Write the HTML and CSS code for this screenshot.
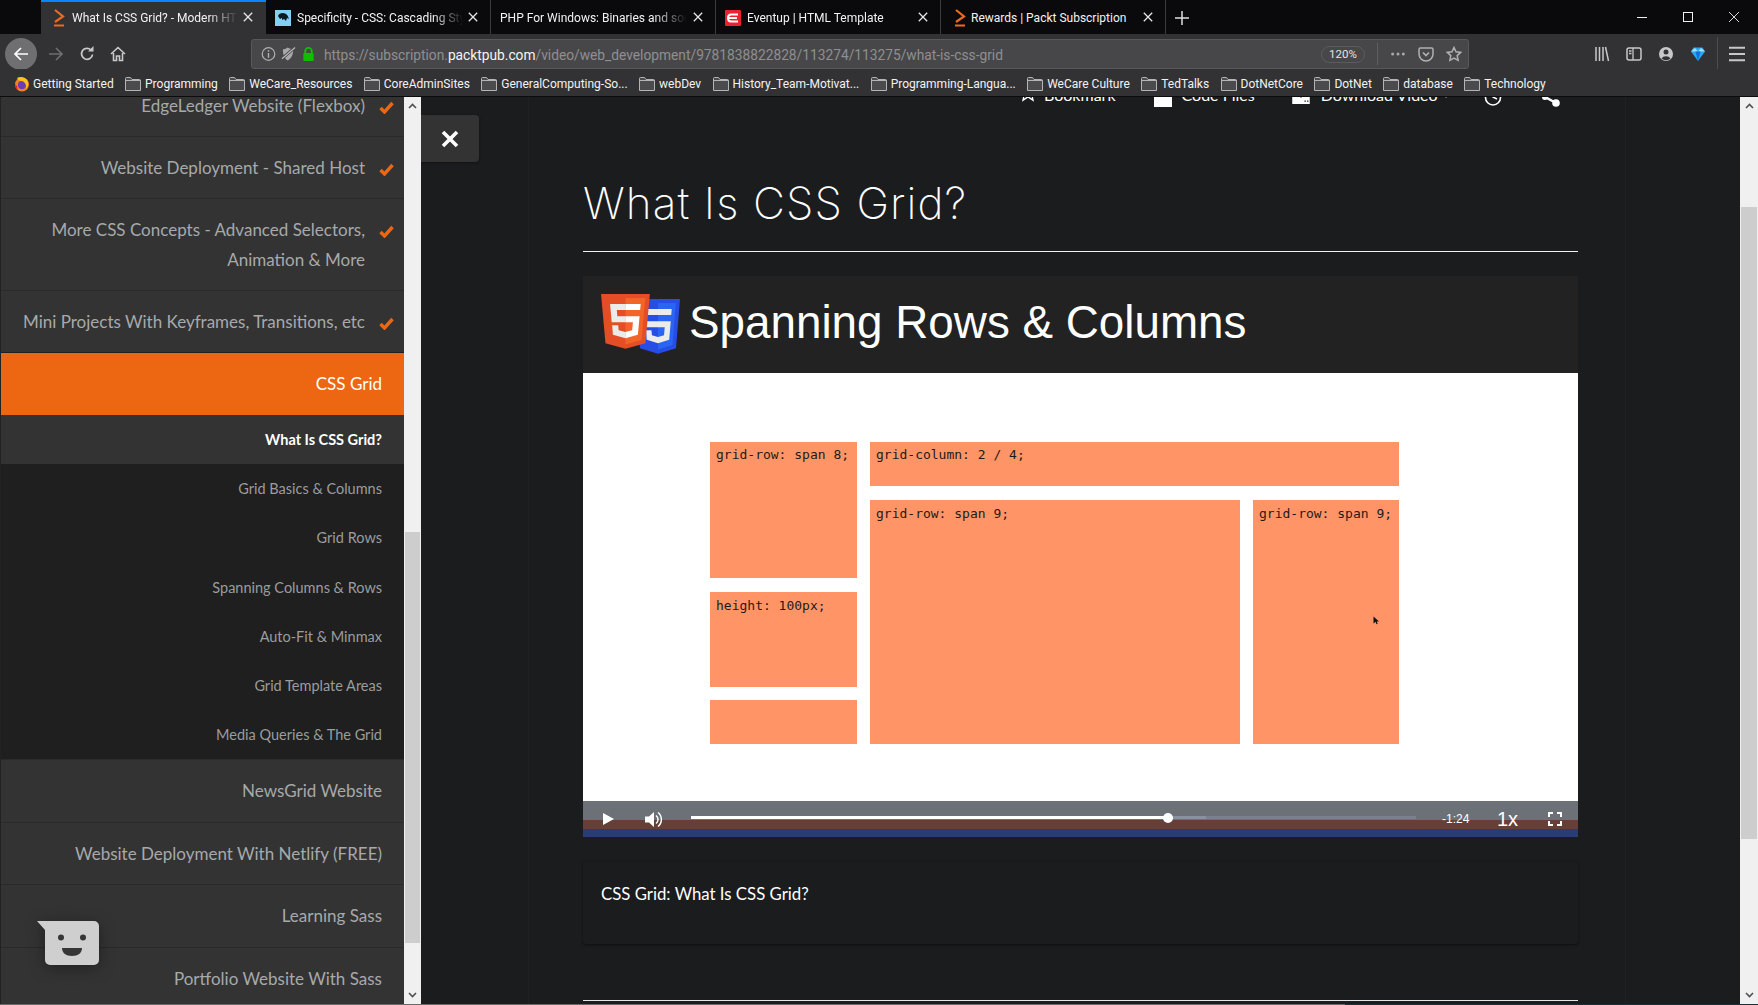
FILE: index.html
```html
<!DOCTYPE html>
<html lang="en">
<head>
<meta charset="utf-8">
<title>What Is CSS Grid? - Modern HTML</title>
<link rel="stylesheet" href="styles.css">
</head>
<body>
<svg class="defs" width="0" height="0" aria-hidden="true">
  <symbol id="folder" viewBox="0 0 16 14"><path d="M.5 13.5V1.5a1 1 0 0 1 1-1h4l1.5 2h7.5a1 1 0 0 1 1 1v10z" fill="#4b4b4d" stroke="#b4b4b6"/><path d="M.5 3.5h15" stroke="#b4b4b6"/></symbol>
  <symbol id="packt" viewBox="0 0 14 18"><path d="M2 1l8 6.5L2 13" fill="none" stroke="#ee6a1c" stroke-width="2.2"/><path d="M1 16.5h10" stroke="#ee6a1c" stroke-width="2"/></symbol>
  <symbol id="close" viewBox="0 0 10 10"><path d="M.8.8l8.4 8.4M9.2.8L.8 9.2" stroke="#e6e6e6" stroke-width="1.3" fill="none"/></symbol>
  <symbol id="check" viewBox="0 0 15 13"><path d="M1.5 7l4 4 8-9" fill="none" stroke="#ed6611" stroke-width="3.4"/></symbol>
  <symbol id="up" viewBox="0 0 9 6"><path d="M1 5l3.5-3.5L8 5" fill="none" stroke="#505050" stroke-width="1.6"/></symbol>
  <symbol id="down" viewBox="0 0 9 6"><path d="M1 1l3.5 3.5L8 1" fill="none" stroke="#505050" stroke-width="1.6"/></symbol>
</svg>

<header class="chrome">
  <div class="tabbar">
    <div class="tab tab-active">
      <svg class="fav fav-packt"><use href="#packt"/></svg>
      <span class="tab-label">What Is CSS Grid? - Modern HTML</span>
      <svg class="tab-close"><use href="#close"/></svg>
    </div>
    <div class="tab">
      <svg class="fav" viewBox="0 0 16 16"><rect width="16" height="16" fill="#83d0f2"/><path d="M3 6c1-3 5-4 8-2 2 1 2 3 3 5l-2-1-1 3-2-2-2 1V8L5 9z" fill="#0c1a24"/></svg>
      <span class="tab-label">Specificity - CSS: Cascading Style Sheets</span>
      <svg class="tab-close"><use href="#close"/></svg>
    </div>
    <div class="tab">
      <span class="tab-label tab-label-wide">PHP For Windows: Binaries and sources</span>
      <svg class="tab-close"><use href="#close"/></svg>
    </div>
    <div class="tab">
      <svg class="fav" viewBox="0 0 16 16"><rect width="16" height="16" rx="1" fill="#e8222e"/><path d="M13 4.500H6C4 4.500 3 6 3 8s1 3.500 3 3.500h7M3.500 8H12" fill="none" stroke="#fff" stroke-width="2"/></svg>
      <span class="tab-label">Eventup | HTML Template</span>
      <svg class="tab-close"><use href="#close"/></svg>
    </div>
    <div class="tab">
      <svg class="fav fav-packt"><use href="#packt"/></svg>
      <span class="tab-label tab-label-plain">Rewards | Packt Subscription</span>
      <svg class="tab-close"><use href="#close"/></svg>
    </div>
    <svg class="newtab" viewBox="0 0 14 14"><path d="M7 0v14M0 7h14" stroke="#e0e0e0" stroke-width="1.5"/></svg>
    <div class="win-controls">
      <span class="win-btn"><svg viewBox="0 0 10 10"><path d="M0 5.500h10" stroke="#f0f0f0"/></svg></span>
      <span class="win-btn"><svg viewBox="0 0 10 10"><rect x=".5" y=".5" width="9" height="9" fill="none" stroke="#f0f0f0"/></svg></span>
      <span class="win-btn"><svg viewBox="0 0 10 10"><path d="M0 0l10 10M10 0L0 10" stroke="#f0f0f0" stroke-width=".9"/></svg></span>
    </div>
  </div>

  <div class="navbar">
    <span class="back"><svg viewBox="0 0 16 16"><path d="M15 8H2M8 2L2 8l6 6" fill="none" stroke="#fff" stroke-width="1.700"/></svg></span>
    <span class="nav-btn"><svg viewBox="0 0 16 16"><path d="M1 8h13M8 2l6 6-6 6" fill="none" stroke="#6e6e70" stroke-width="1.700"/></svg></span>
    <span class="nav-btn"><svg viewBox="0 0 16 16"><path d="M13.500 8.500A5.500 5.500 0 1 1 12 4" fill="none" stroke="#c8c8ca" stroke-width="1.800"/><path d="M9 5.500h5.500V0z" fill="#c8c8ca"/></svg></span>
    <span class="nav-btn"><svg viewBox="0 0 16 16"><path d="M1 8l7-6.500L15 8M3.500 7v7.500h3V10h3v4.500h3V7" fill="none" stroke="#c8c8ca" stroke-width="1.600"/></svg></span>
    <div class="urlbar">
      <span class="url-icon"><svg viewBox="0 0 16 16"><circle cx="8" cy="8" r="6.700" fill="none" stroke="#b0b0b2" stroke-width="1.300"/><path d="M8 7v5M8 4v1.600" stroke="#b0b0b2" stroke-width="1.500"/></svg></span>
      <span class="url-icon"><svg viewBox="0 0 16 16"><path d="M2 3c2 0 4-1 5-2 2 1 4 2 6 2 0 5-1 9-6 12C3 12 2 8 2 3z" fill="#a8a8aa"/><path d="M1 13L15 1" stroke="#474749" stroke-width="3"/><path d="M1 13L15 1" stroke="#b8b8ba" stroke-width="1.300"/></svg></span>
      <span class="url-icon"><svg viewBox="0 0 16 16"><path d="M4.500 7V5a3.500 3.500 0 0 1 7 0v2" fill="none" stroke="#12bc00" stroke-width="2"/><rect x="2.500" y="7" width="11" height="8.500" rx="1" fill="#12bc00"/></svg></span>
      <span class="url-text">https://subscription.<b class="url-domain">packtpub.com</b>/video/web_development/9781838822828/113274/113275/what-is-css-grid</span>
      <span class="zoom-pill">120%</span>
      <span class="url-sep"></span>
      <span class="url-action"><svg viewBox="0 0 18 18"><circle cx="3" cy="9" r="1.700" fill="#a8a8aa"/><circle cx="9" cy="9" r="1.700" fill="#a8a8aa"/><circle cx="15" cy="9" r="1.700" fill="#a8a8aa"/></svg></span>
      <span class="url-action"><svg viewBox="0 0 16 16"><path d="M1 3.500A1.500 1.500 0 0 1 2.500 2h11A1.500 1.500 0 0 1 15 3.500V8a7 7 0 0 1-14 0z" fill="none" stroke="#b0b0b2" stroke-width="1.500"/><path d="M5 6.500l3 3 3-3" fill="none" stroke="#b0b0b2" stroke-width="1.700"/></svg></span>
      <span class="url-action"><svg viewBox="0 0 16 16"><path d="M8 1.500l2 4.300 4.700.6-3.500 3.200.9 4.700L8 12l-4.100 2.300.9-4.700L1.300 6.400 6 5.800z" fill="none" stroke="#b0b0b2" stroke-width="1.500"/></svg></span>
    </div>
    <div class="tools">
      <span class="tool"><svg viewBox="0 0 16 16"><path d="M2 1v14M5.500 1v14M9 1v14M11.500 1l3 14" stroke="#c8c8ca" stroke-width="1.500" fill="none"/></svg></span>
      <span class="tool"><svg viewBox="0 0 16 16"><rect x="1" y="2" width="14" height="12" rx="2" fill="none" stroke="#c8c8ca" stroke-width="1.500"/><path d="M7 2v12M3 5h2.500M3 7.500h2.500" stroke="#c8c8ca" stroke-width="1.300"/></svg></span>
      <span class="tool"><svg viewBox="0 0 16 16"><circle cx="8" cy="8" r="7" fill="#c8c8ca"/><circle cx="8" cy="6" r="2.500" fill="#323234"/><path d="M3.500 12.500a5 4 0 0 1 9 0 6.500 6.500 0 0 1-9 0z" fill="#323234"/></svg></span>
      <span class="tool"><svg viewBox="0 0 16 16"><path d="M3.500 1.500h9L15 5.500 8 15 1 5.500z" fill="#2aa7f0"/><path d="M5 2l-4 3.500h14L11 2 8 5.500z" fill="#9fe0ff"/><path d="M5.500 5.500L8 15l2.500-9.500z" fill="#0f6fd8"/></svg></span>
      <span class="tools-sep"></span>
      <span class="tool"><svg viewBox="0 0 14 14"><path d="M0 1.500h14M0 7h14M0 12.500h14" stroke="#c8c8ca" stroke-width="1.800"/></svg></span>
    </div>
  </div>

  <nav class="bookmarks">
    <span class="bm bm-first"><svg class="bm-icon" viewBox="0 0 16 16"><circle cx="8" cy="8.500" r="7" fill="#f5821f"/><circle cx="8" cy="9" r="4.200" fill="#6a3fb5"/><path d="M3 2c3-2 8-1 10 2 2 3 1 7-1 9 1-4-1-7-4-8-2 0-3 0-5-3z" fill="#f9c51d"/><path d="M1 8c0 3 1 5 3 6l-1-4z" fill="#e5272f"/></svg><span>Getting Started</span></span>
    <span class="bm"><svg class="bm-icon"><use href="#folder"/></svg><span>Programming</span></span>
    <span class="bm"><svg class="bm-icon"><use href="#folder"/></svg><span>WeCare_Resources</span></span>
    <span class="bm"><svg class="bm-icon"><use href="#folder"/></svg><span>CoreAdminSites</span></span>
    <span class="bm"><svg class="bm-icon"><use href="#folder"/></svg><span>GeneralComputing-So...</span></span>
    <span class="bm"><svg class="bm-icon"><use href="#folder"/></svg><span>webDev</span></span>
    <span class="bm"><svg class="bm-icon"><use href="#folder"/></svg><span>History_Team-Motivat...</span></span>
    <span class="bm"><svg class="bm-icon"><use href="#folder"/></svg><span>Programming-Langua...</span></span>
    <span class="bm"><svg class="bm-icon"><use href="#folder"/></svg><span>WeCare Culture</span></span>
    <span class="bm"><svg class="bm-icon"><use href="#folder"/></svg><span>TedTalks</span></span>
    <span class="bm"><svg class="bm-icon"><use href="#folder"/></svg><span>DotNetCore</span></span>
    <span class="bm"><svg class="bm-icon"><use href="#folder"/></svg><span>DotNet</span></span>
    <span class="bm"><svg class="bm-icon"><use href="#folder"/></svg><span>database</span></span>
    <span class="bm"><svg class="bm-icon"><use href="#folder"/></svg><span>Technology</span></span>
  </nav>
</header>

<div class="viewport">
  <aside class="sidebar">
    <div class="course">
      <div class="course-list">
        <div class="row row-done"><span class="row-text">EdgeLedger Website (Flexbox)</span><svg class="check"><use href="#check"/></svg></div>
        <div class="row row-done"><span class="row-text">Website Deployment - Shared Host</span><svg class="check"><use href="#check"/></svg></div>
        <div class="row row-done"><span class="row-text">More CSS Concepts - Advanced Selectors,<br>Animation &amp; More</span><svg class="check"><use href="#check"/></svg></div>
        <div class="row row-done row-last"><span class="row-text">Mini Projects With Keyframes, Transitions, etc</span><svg class="check"><use href="#check"/></svg></div>
        <div class="row row-active"><span class="row-text">CSS Grid</span></div>
        <ul class="lessons">
          <li class="lesson lesson-current">What Is CSS Grid?</li>
          <li class="lesson">Grid Basics &amp; Columns</li>
          <li class="lesson">Grid Rows</li>
          <li class="lesson">Spanning Columns &amp; Rows</li>
          <li class="lesson">Auto-Fit &amp; Minmax</li>
          <li class="lesson">Grid Template Areas</li>
          <li class="lesson">Media Queries &amp; The Grid</li>
        </ul>
        <div class="row row-lower"><span class="row-text">NewsGrid Website</span></div>
        <div class="row row-lower"><span class="row-text">Website Deployment With Netlify (FREE)</span></div>
        <div class="row row-lower"><span class="row-text">Learning Sass</span></div>
        <div class="row row-lower"><span class="row-text">Portfolio Website With Sass</span></div>
      </div>
      <svg class="chat" viewBox="0 0 62 44"><path d="M0 0h57a5 5 0 0 1 5 5v34a5 5 0 0 1-5 5H13a5 5 0 0 1-5-5V9z" fill="#cfcfcf"/><circle cx="24" cy="16.500" r="3" fill="#363636"/><circle cx="46" cy="16.500" r="3" fill="#363636"/><path d="M25 27h20c0 5-4 8-10 8s-10-3-10-8z" fill="#363636"/></svg>
    </div>
    <div class="scrollbar scrollbar-side">
      <svg class="sb-arrow"><use href="#up"/></svg>
      <span class="sb-thumb"></span>
      <svg class="sb-arrow sb-arrow-end"><use href="#down"/></svg>
    </div>
  </aside>

  <main class="content">
    <button class="close-panel" aria-label="Close"><svg viewBox="0 0 18 18"><path d="M2 2l14 14M16 2L2 16" stroke="#fff" stroke-width="3.600"/></svg></button>
    <div class="panel">
      <div class="actions">
        <div class="actions-row">
          <span class="action action-bookmark"><svg class="action-icon-star" viewBox="0 0 16 24"><path d="M8 1l2.300 5.500 5.700.5-4.300 3.800 1.300 5.700L8 13.500 3 16.500l1.300-5.700L0 7l5.700-.5z" transform="translate(0 -1) scale(1 1.100)" fill="none" stroke="#fff" stroke-width="1.300"/></svg>Bookmark</span>
          <span class="action action-code"><span class="code-box"></span>Code Files</span>
          <span class="action action-dl"><svg class="dl-icon" viewBox="0 0 20 24"><path d="M0 14h7l3 3 3-3h7v10H0z" fill="#fff"/><rect x="14" y="20" width="1.500" height="1.500" fill="#1b1c1e"/><rect x="17" y="20" width="1.500" height="1.500" fill="#1b1c1e"/></svg>Download Video <span class="caret">▾</span></span>
          <svg class="action-clock" viewBox="0 0 18 24"><circle cx="9" cy="14.500" r="7.500" fill="none" stroke="#fff" stroke-width="1.600"/><path d="M9 8v6l4 2" fill="none" stroke="#fff" stroke-width="1.600"/></svg>
          <svg class="action-share" viewBox="0 0 18 24"><circle cx="3" cy="14" r="3" fill="#fff"/><circle cx="14" cy="20" r="3.800" fill="#fff"/><path d="M3 14l11 6" stroke="#fff" stroke-width="2.500"/></svg>
        </div>
      </div>
      <h1 class="page-title">What Is CSS Grid?</h1>

      <section class="video">
        <div class="slide-head">
          <svg class="logos" viewBox="0 0 80 60">
            <g transform="translate(32.100 5) scale(.0973 .107)">
              <path d="M71 461L30 0h452l-41 461-185 51z" fill="#264de4"/>
              <path d="M256 473l149-42 35-394H256z" fill="#2965f1"/>
              <path d="M114 94h283l-5 56H120zM125 208h262l-16 174-115 32-116-32-7-89h56l4 45 63 17 62-17 7-73H130z" fill="#ebebeb"/>
            </g>
            <g transform="translate(-3.200 0) scale(.108 .107)">
              <path d="M71 461L30 0h452l-41 461-185 51z" fill="#e44d26"/>
              <path d="M256 473l149-42 35-394H256z" fill="#f16529"/>
              <path d="M256 208h-75l-5-58h80V94H114l1 15 14 156h127zM256 355l-63-17-4-45h-56l7 89 116 32z" fill="#ebebeb"/>
              <path d="M255 208v57h70l-7 73-63 17v59l116-32 16-174zM255 94v56h137l5-56z" fill="#fff"/>
            </g>
          </svg>
          <span class="slide-title">Spanning Rows &amp; Columns</span>
        </div>
        <div class="stage">
          <div class="demo">
            <div class="demo-left">
              <div class="cell cell-a">grid-row: span 8;</div>
              <div class="cell cell-b">height: 100px;</div>
              <div class="cell cell-c"></div>
            </div>
            <div class="demo-right">
              <div class="cell cell-top">grid-column: 2 / 4;</div>
              <div class="demo-bottom">
                <div class="cell cell-mid">grid-row: span 9;</div>
                <div class="cell cell-side">grid-row: span 9;
                  <svg class="pointer" viewBox="0 0 6 9"><path d="M.5.500v7l2-1.700 1 2.500 1.200-.5-1-2.400h2.300z" fill="#111"/></svg>
                </div>
              </div>
            </div>
          </div>
        </div>
        <div class="player">
          <div class="band band-grey"></div>
          <div class="band band-brown"></div>
          <div class="band band-blue"></div>
          <div class="controls">
            <svg class="ctl-play" viewBox="0 0 11 12"><path d="M0 0l11 6-11 6z" fill="#fff"/></svg>
            <svg class="ctl-vol" viewBox="0 0 18 17"><path d="M0 5.500h4L9 1v15l-5-4.500H0z" fill="#fff"/><path d="M11 4.500a5 5 0 0 1 0 8M13 1.500a9 9 0 0 1 0 14" fill="none" stroke="#fff" stroke-width="1.500"/></svg>
            <div class="progress">
              <span class="buffered"></span>
              <span class="played"><span class="knob"></span></span>
            </div>
            <span class="time">-1:24</span>
            <span class="rate">1x</span>
            <svg class="ctl-full" viewBox="0 0 14 14"><path d="M1 5V1h4M9 1h4v4M13 9v4H9M5 13H1V9" fill="none" stroke="#fff" stroke-width="2"/></svg>
          </div>
        </div>
      </section>

      <section class="caption">CSS Grid: What Is CSS Grid?</section>
      <hr class="end-rule">
    </div>
    <div class="scrollbar scrollbar-main">
      <svg class="sb-arrow"><use href="#up"/></svg>
      <span class="sb-thumb"></span>
      <svg class="sb-arrow sb-arrow-end"><use href="#down"/></svg>
    </div>
  </main>
</div>
<div class="window-edge"></div>
</body>
</html>
```

FILE: styles.css
```css
* { box-sizing: border-box; }
html, body { margin: 0; padding: 0; height: 100%; }
body {
  width: 1758px;
  height: 1005px;
  overflow: hidden;
  background: #1b1c1e;
  display: flex;
  flex-direction: column;
  font-family: "Lato", "Liberation Sans", sans-serif;
}
.defs { position: absolute; }
svg { display: block; }

/* browser chrome */
.chrome {
  flex: 0 0 97px;
  min-height: 0;
  display: flex;
  flex-direction: column;
  font-family: "Roboto", "Liberation Sans", sans-serif;
  font-size: 12px;
  color: #f2f2f2;
}
.tabbar {
  flex: 0 0 34px;
  background: #0a0a0c;
  display: flex;
  padding-left: 41px;
}
.tab {
  flex: 0 0 225px;
  display: flex;
  align-items: center;
  position: relative;
  padding-left: 9px;
  padding-top: 2px;
  border-right: 1px solid #3c3c3e;
}
.tab-active {
  background: #323234;
  border-right: 0;
  box-shadow: inset 0 2px 0 #0a84ff;
  padding-left: 12px;
}
.fav { width: 16px; height: 16px; flex: none; margin-right: 6px; }
.fav-packt { width: 14px; height: 18px; margin-left: 4px; margin-right: 3px; }
.tab-active .fav-packt { margin-left: 0; margin-right: 5px; width: 14px; }
.tab-label {
  width: 166px;
  white-space: nowrap;
  overflow: hidden;
  -webkit-mask-image: linear-gradient(to right, #000 82%, transparent 100%);
  mask-image: linear-gradient(to right, #000 82%, transparent 100%);
}
.tab-label-wide { width: 187px; }
.tab-label-plain { -webkit-mask-image: none; mask-image: none; }
.tab-close { position: absolute; left: 202px; top: 12px; width: 10px; height: 10px; }
.newtab { width: 14px; height: 14px; margin: 11px 0 0 9px; }
.win-controls { margin-left: auto; margin-right: 1px; display: flex; }
.win-btn { width: 46px; height: 34px; display: flex; align-items: center; justify-content: center; }
.win-btn svg { width: 10px; height: 10px; }

.navbar {
  flex: 0 0 35px;
  min-height: 0;
  background: #323234;
  display: flex;
  align-items: center;
  padding-left: 5px;
  padding-top: 5px;
}
.back {
  width: 32px; height: 32px; border-radius: 50%; flex: none;
  background: #6f6f71;
  display: flex; align-items: center; justify-content: center;
  margin-right: 3px;
}
.back svg { width: 16px; height: 16px; }
.nav-btn { width: 31px; height: 30px; flex: none; display: flex; align-items: center; justify-content: center; }
.nav-btn svg { width: 16px; height: 16px; }
.urlbar {
  width: 1218px;
  height: 30px;
  flex: none;
  margin-left: 118px;
  background: #474749;
  border: 1px solid #58585a;
  border-radius: 3px;
  display: flex;
  align-items: center;
  padding-left: 6px;
}
.url-icon { width: 20px; display: flex; justify-content: center; }
.url-icon svg { width: 15px; height: 16px; }
.url-text { margin-left: 6px; padding-top: 1px; font-size: 13.750px; color: #8f8f91; white-space: nowrap; flex: 1; }
.url-domain { font-weight: 400; color: #f4f4f4; }
.zoom-pill {
  width: 44px; height: 17px; border-radius: 9px;
  border: 1px solid #5c5c5e;
  text-align: center; font-size: 11.500px; line-height: 15px; color: #e4e4e4;
}
.url-sep { width: 1px; height: 22px; background: #5f5f61; margin: 0 6px 0 12px; }
.url-action { width: 28px; display: flex; justify-content: center; }
.url-action svg { width: 16px; height: 16px; }
.tools { display: flex; align-items: center; margin-left: 117px; }
.tool { width: 32px; display: flex; justify-content: center; }
.tool svg { width: 16px; height: 16px; }
.tools-sep { width: 1px; height: 34px; background: #4c4c4e; margin: 0 3px; }

.bookmarks {
  flex: 0 0 28px;
  background: #323234;
  border-bottom: 1px solid #0c0c0d;
  display: flex;
  align-items: center;
  padding: 3px 0 0 14px;
  gap: 11.400px;
  position: relative;
}
.bm { display: flex; align-items: center; gap: 4px; white-space: nowrap; }
.bm-first { gap: 3px; }
.bm-icon { width: 16px; height: 14px; }
.bm-first .bm-icon { height: 16px; }

/* page */
.viewport { flex: 1; min-height: 0; display: flex; }
.window-edge { flex: 0 0 1px; background: linear-gradient(to right, #6a6a6a 1345px, #16303c 1345px); }
.sidebar { flex: 0 0 421px; display: flex; }
.course {
  flex: 0 0 404px;
  background: #333;
  border-left: 1px solid #222;
  overflow: hidden;
  position: relative;
}
.course-list { margin-top: -22px; }
.row {
  display: flex;
  justify-content: flex-end;
  align-items: flex-start;
  text-align: right;
  padding: 16px 22px 15px 0;
  border-bottom: 1px solid #2a2a2a;
  font-size: 17px;
  line-height: 30px;
  color: #a7a9ab;
}
.row-done { padding-right: 10px; }
.row-last { border-bottom-color: #1f1f1f; }
.check { width: 15px; height: 13px; margin: 10px 0 0 14px; flex: none; }
.row-active { background: #ed6611; color: #fff; border-bottom: 0; padding-bottom: 16px; }
.row-lower { padding-bottom: 15.500px; }
.lessons { margin: 0; padding: 0; list-style: none; background: #1f1f1f; border-bottom: 1px solid #2b2b2b; }
.lesson {
  height: 49.200px;
  padding-right: 22px;
  text-align: right;
  font-size: 14.500px;
  line-height: 50px;
  color: #9a9c9e;
}
.lesson-current { background: #333; color: #fff; font-weight: 700; }
.chat {
  position: absolute;
  left: 36px;
  top: 824px;
  width: 62px;
  height: 44px;
  filter: drop-shadow(0 3px 8px rgba(0,0,0,.35));
}

.scrollbar {
  flex: 0 0 17px;
  background: #f0f0f0;
  display: flex;
  flex-direction: column;
  align-items: center;
  position: relative;
}
.sb-arrow { width: 9px; height: 6px; margin-top: 6px; flex: none; }
.sb-arrow-end { margin-top: auto; margin-bottom: 6px; }
.sb-thumb { background: #cdcdcd; width: 15px; display: block; flex: none; }
.scrollbar-side .sb-thumb { margin-top: 423px; height: 411px; }
.scrollbar-main { flex-basis: 18px; }
.scrollbar-main .sb-thumb { margin-top: 98px; height: 632px; width: 16px; }

.content {
  flex: 1;
  min-width: 0;
  display: flex;
  position: relative;
  background: #1b1c1e;
  overflow: hidden;
}
.close-panel {
  position: absolute;
  left: 0;
  top: 18px;
  width: 58px;
  height: 47px;
  background: #333;
  border: 0;
  border-radius: 0 4px 4px 0;
  box-shadow: 0 1px 3px rgba(0,0,0,.4);
  display: flex; align-items: center; justify-content: center;
  padding: 0;
}
.close-panel svg { width: 18px; height: 18px; }
.panel {
  width: 1098px;
  margin-left: 107px;
  margin-right: auto;
  padding: 0 47px 0 54px;
  border-left: 1px solid #202124;
  border-right: 1px solid #202124;
  overflow: hidden;
}
.actions { height: 10px; overflow: hidden; }
.actions-row {
  margin-top: -14px;
  height: 24px;
  display: flex;
  color: #fff;
  font-size: 16px;
  line-height: 24px;
  white-space: nowrap;
}
.action { display: flex; }
.action-bookmark { margin-left: 437px; gap: 8px; }
.action-icon-star { width: 16px; height: 24px; }
.action-code { margin-left: 38px; gap: 10px; }
.code-box { width: 18px; height: 24px; background: #fff; }
.action-dl { margin-left: 36px; gap: 10px; }
.dl-icon { width: 20px; height: 21px; }
.caret { font-size: 8px; margin-left: -4px; }
.action-clock { width: 18px; height: 24px; margin-left: 36px; }
.action-share { width: 18px; height: 24px; margin-left: 40px; }

.page-title {
  margin: 0 0 24px;
  padding: 68px 0 20px;
  border-bottom: 1px solid #f0f0f0;
  font-family: "Inter", "Lato", sans-serif;
  font-weight: 200;
  font-size: 44px;
  letter-spacing: 1.100px;
  line-height: 56px;
  color: #fff;
}
.video { display: flex; flex-direction: column; height: 561px; }
.slide-head {
  flex: 0 0 97px;
  background: #222;
  display: flex;
  align-items: center;
  padding-left: 18px;
}
.logos { width: 80px; height: 60px; margin-top: -2px; }
.slide-title {
  margin: -3px 0 0 8px;
  font-family: "Liberation Sans", Arial, sans-serif;
  font-size: 45.800px;
  color: #fff;
}
.stage { flex: 0 0 428px; background: #fff; padding: 69px 0 0 127px; }
.demo { display: flex; gap: 13px; }
.demo-left { width: 147px; display: flex; flex-direction: column; gap: 13px; }
.demo-right { width: 529px; display: flex; flex-direction: column; gap: 14px; }
.demo-bottom { display: flex; gap: 13px; height: 244px; }
.cell {
  background: #ff9566;
  padding: 5px 6px;
  font-family: "DejaVu Sans Mono", monospace;
  font-size: 13px;
  line-height: 16px;
  color: #1e1a18;
  white-space: nowrap;
}
.cell-a { height: 136px; margin-bottom: 1px; }
.cell-b { height: 95px; padding-top: 6px; }
.cell-c { height: 44px; }
.cell-top { height: 44px; }
.cell-mid { width: 370px; padding-top: 6px; }
.cell-side { width: 146px; position: relative; padding-top: 6px; }
.pointer { position: absolute; left: 120px; top: 116px; width: 6px; height: 9px; }

.player { flex: 1; position: relative; display: flex; flex-direction: column; }
.band-grey { flex: 0 0 19px; background: #6b7177; }
.band-brown { flex: 0 0 9px; background: #663f37; }
.band-blue { flex: 1; background: #283d74; }
.controls {
  position: absolute;
  inset: 0;
  display: flex;
  align-items: center;
  padding-left: 20px;
  color: #fff;
  font-family: "Liberation Sans", Arial, sans-serif;
}
.ctl-play { width: 11px; height: 12px; }
.ctl-vol { width: 18px; height: 17px; margin-left: 31px; }
.progress {
  width: 725px; height: 3px; margin: 0 0 3px 28px;
  background: #78818d;
  position: relative;
}
.buffered { position: absolute; left: 0; top: 0; bottom: 0; width: 71%; background: #8791a0; }
.played { position: absolute; left: 0; top: 0; bottom: 0; width: 65.800%; background: #fff; }
.knob {
  position: absolute; right: -5px; top: -3.500px;
  width: 10px; height: 10px; border-radius: 50%; background: #fff;
}
.time { margin-left: 26px; width: 29px; font-size: 12px; }
.rate { margin-left: 26px; width: 18px; font-size: 20px; line-height: 20px; }
.ctl-full { width: 14px; height: 14px; margin-left: 33px; }

.caption {
  margin-top: 25px;
  height: 82px;
  padding: 0 0 20px 18px;
  background: #1b1c1e;
  border-radius: 3px;
  box-shadow: 0 1px 3px rgba(0,0,0,.5);
  display: flex;
  align-items: center;
  font-size: 16.800px;
  color: #fff;
}
.end-rule { margin: 56px 0 0; border: 0; height: 1px; background: #e6e6e6; }
```
